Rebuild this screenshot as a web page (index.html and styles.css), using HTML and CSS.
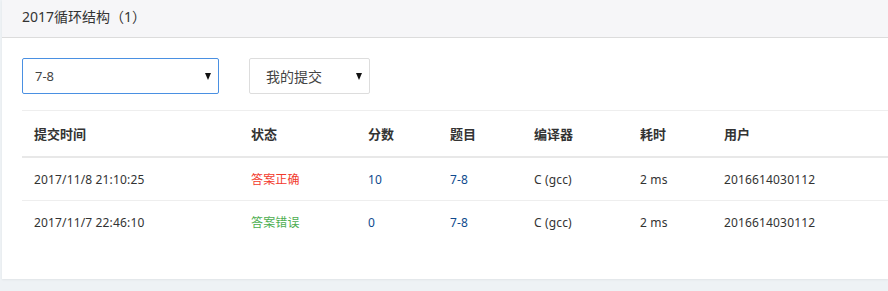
FILE: index.html
```html
<!DOCTYPE html>
<html lang="zh">
<head>
<meta charset="utf-8">
<link rel="stylesheet" href="styles.css">
</head>
<body>
<div class="card">
  <div class="card-header">2017循环结构（1）</div>
  <div class="card-body">
    <div class="filters">
      <div class="select select-active"><span>7-8</span><span class="arrow"></span></div>
      <div class="select select-small"><span>我的提交</span><span class="arrow"></span></div>
    </div>
    <table class="subs">
      <colgroup>
        <col class="c1"><col class="c2"><col class="c3"><col class="c4"><col class="c5"><col class="c6"><col>
      </colgroup>
      <thead>
        <tr><th>提交时间</th><th>状态</th><th>分数</th><th>题目</th><th>编译器</th><th>耗时</th><th>用户</th></tr>
      </thead>
      <tbody>
        <tr>
          <td>2017/11/8 21:10:25</td><td class="ok">答案正确</td><td class="link">10</td><td class="link">7-8</td><td>C (gcc)</td><td>2 ms</td><td>2016614030112</td>
        </tr>
        <tr class="last">
          <td>2017/11/7 22:46:10</td><td class="wrong">答案错误</td><td class="link">0</td><td class="link">7-8</td><td>C (gcc)</td><td>2 ms</td><td>2016614030112</td>
        </tr>
      </tbody>
    </table>
  </div>
</div>
</body>
</html>
```
FILE: styles.css
```css
html, body {
  margin: 0;
  padding: 0;
}
body {
  background: #eef2f5;
  font-family: "Noto Sans", "Noto Sans CJK SC", sans-serif;
  color: #333;
  overflow: hidden;
  width: 888px;
  height: 291px;
}
.card {
  margin-left: 2px;
  width: 886px;
  background: #fff;
  box-shadow: 0 1px 2px rgba(0,0,0,0.06);
  padding-bottom: 36px;
}
.card-header {
  height: 38px;
  box-sizing: border-box;
  background: #f6f6f8;
  border-bottom: 1px solid #dcdcdc;
  padding-left: 20px;
  font-size: 14px;
  line-height: 34px;
  color: #333;
}
.card-body {
  padding: 20px 0 0 20px;
}
.filters {
  display: flex;
  gap: 30px;
  margin-bottom: 16px;
}
.select {
  box-sizing: border-box;
  height: 36px;
  width: 197px;
  border: 1px solid #ddd;
  border-radius: 2px;
  display: flex;
  align-items: center;
  justify-content: space-between;
  padding: 0 7px 0 12px;
  font-size: 13px;
  color: #444;
}
.select-active {
  border-color: #4a90e2;
}
.select-small {
  width: 121px;
  padding-left: 16px;
  font-size: 14px;
}
.arrow {
  width: 0;
  height: 0;
  border-left: 3.5px solid transparent;
  border-right: 3.5px solid transparent;
  border-top: 7px solid #111;
}
.subs {
  border-collapse: collapse;
  table-layout: fixed;
  width: 866px;
  font-size: 12px;
  color: #333;
}
.c1 { width: 217px; }
.c2 { width: 117px; }
.c3 { width: 82px; }
.c4 { width: 84px; }
.c5 { width: 106px; }
.c6 { width: 84px; }
.subs th {
  text-align: left;
  font-weight: bold;
  font-size: 13px;
  color: #333;
  height: 45px;
  padding: 0 0 0 12px;
  border-top: 1px solid #eee;
  border-bottom: 2px solid #e8e8e8;
}
.subs td {
  height: 42px;
  padding: 0 0 0 12px;
  border-bottom: 1px solid #eee;
  white-space: nowrap;
  letter-spacing: 0.15px;
}
.subs tr.last td {
  border-bottom: none;
}
.ok { color: #f23a2c; }
.wrong { color: #4cae4f; }
.link { color: #0f4a8e; }
```
